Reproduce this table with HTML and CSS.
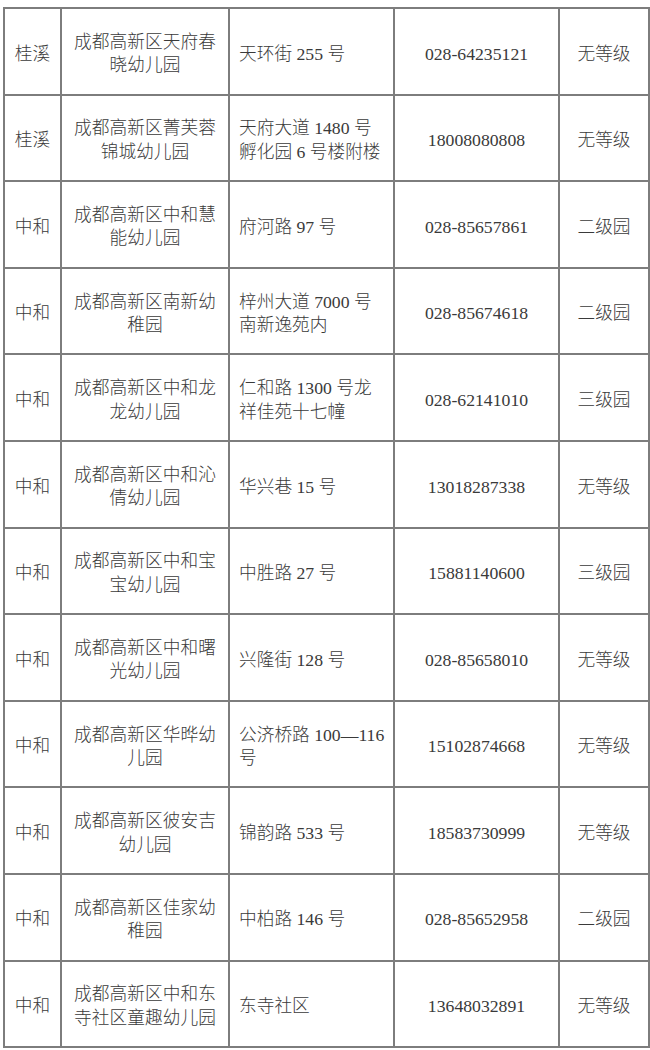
FILE: index.html
```html
<!DOCTYPE html>
<html lang="zh-CN">
<head>
<meta charset="utf-8">
<title>幼儿园名单</title>
<link rel="stylesheet" href="styles.css">
</head>
<body>
<table class="list">
  <colgroup>
    <col class="c-area"><col class="c-name"><col class="c-addr"><col class="c-tel"><col class="c-grade">
  </colgroup>
  <tbody>
    <tr>
      <td class="area">桂溪</td>
      <td class="name"><div class="nm"><span class="full">成都高新区天府春</span><span>晓幼儿园</span></div></td>
      <td class="addr">天环街 255 号</td>
      <td class="tel">028-64235121</td>
      <td class="grade">无等级</td>
    </tr>
    <tr>
      <td class="area">桂溪</td>
      <td class="name"><div class="nm"><span class="full">成都高新区菁芙蓉</span><span>锦城幼儿园</span></div></td>
      <td class="addr">天府大道 1480 号<br>孵化园 6 号楼附楼</td>
      <td class="tel">18008080808</td>
      <td class="grade">无等级</td>
    </tr>
    <tr>
      <td class="area">中和</td>
      <td class="name"><div class="nm"><span class="full">成都高新区中和慧</span><span>能幼儿园</span></div></td>
      <td class="addr">府河路 97 号</td>
      <td class="tel">028-85657861</td>
      <td class="grade">二级园</td>
    </tr>
    <tr>
      <td class="area">中和</td>
      <td class="name"><div class="nm"><span class="full">成都高新区南新幼</span><span>稚园</span></div></td>
      <td class="addr">梓州大道 7000 号<br>南新逸苑内</td>
      <td class="tel">028-85674618</td>
      <td class="grade">二级园</td>
    </tr>
    <tr>
      <td class="area">中和</td>
      <td class="name"><div class="nm"><span class="full">成都高新区中和龙</span><span>龙幼儿园</span></div></td>
      <td class="addr">仁和路 1300 号龙<br>祥佳苑十七幢</td>
      <td class="tel">028-62141010</td>
      <td class="grade">三级园</td>
    </tr>
    <tr>
      <td class="area">中和</td>
      <td class="name"><div class="nm"><span class="full">成都高新区中和沁</span><span>倩幼儿园</span></div></td>
      <td class="addr">华兴巷 15 号</td>
      <td class="tel">13018287338</td>
      <td class="grade">无等级</td>
    </tr>
    <tr>
      <td class="area">中和</td>
      <td class="name"><div class="nm"><span class="full">成都高新区中和宝</span><span>宝幼儿园</span></div></td>
      <td class="addr">中胜路 27 号</td>
      <td class="tel">15881140600</td>
      <td class="grade">三级园</td>
    </tr>
    <tr>
      <td class="area">中和</td>
      <td class="name"><div class="nm"><span class="full">成都高新区中和曙</span><span>光幼儿园</span></div></td>
      <td class="addr">兴隆街 128 号</td>
      <td class="tel">028-85658010</td>
      <td class="grade">无等级</td>
    </tr>
    <tr>
      <td class="area">中和</td>
      <td class="name"><div class="nm"><span class="full">成都高新区华晔幼</span><span>儿园</span></div></td>
      <td class="addr">公济桥路 100—116<br>号</td>
      <td class="tel">15102874668</td>
      <td class="grade">无等级</td>
    </tr>
    <tr>
      <td class="area">中和</td>
      <td class="name"><div class="nm"><span class="full">成都高新区彼安吉</span><span>幼儿园</span></div></td>
      <td class="addr">锦韵路 533 号</td>
      <td class="tel">18583730999</td>
      <td class="grade">无等级</td>
    </tr>
    <tr>
      <td class="area">中和</td>
      <td class="name"><div class="nm"><span class="full">成都高新区佳家幼</span><span>稚园</span></div></td>
      <td class="addr">中柏路 146 号</td>
      <td class="tel">028-85652958</td>
      <td class="grade">二级园</td>
    </tr>
    <tr>
      <td class="area">中和</td>
      <td class="name"><div class="nm"><span class="full">成都高新区中和东</span><span class="full">寺社区童趣幼儿园</span></div></td>
      <td class="addr">东寺社区</td>
      <td class="tel">13648032891</td>
      <td class="grade">无等级</td>
    </tr>
  </tbody>
</table>
</body>
</html>
```

FILE: styles.css
```css
html, body {
  background: #ffffff;
}
body {
  margin: 7px 0 0 3px;
  font-family: "Liberation Serif", "Noto Sans CJK SC", serif;
  font-size: 17.7px;
  font-weight: 300;
  color: #3a3a3a;
}
.list {
  border-collapse: collapse;
  table-layout: fixed;
  width: 645px;
}
.c-area { width: 57px; }
.c-name { width: 168px; }
.c-addr { width: 165px; }
.c-tel { width: 165px; }
.c-grade { width: 90px; }

.list td {
  border: 2px solid #7d7d7d;
  height: 86.6px;
  padding: 6px 0 0 0;
  box-sizing: border-box;
  vertical-align: middle;
  line-height: 23.5px;
  white-space: nowrap;
  overflow: hidden;
}
.area, .tel, .grade {
  text-align: center;
}
.addr {
  text-align: left;
  padding-left: 9px !important;
}
.nm {
  width: 142px;
  margin: 0 auto;
  text-align: center;
}
.nm span {
  display: block;
}
.nm .full {
  text-align: justify;
  text-align-last: justify;
}
```
